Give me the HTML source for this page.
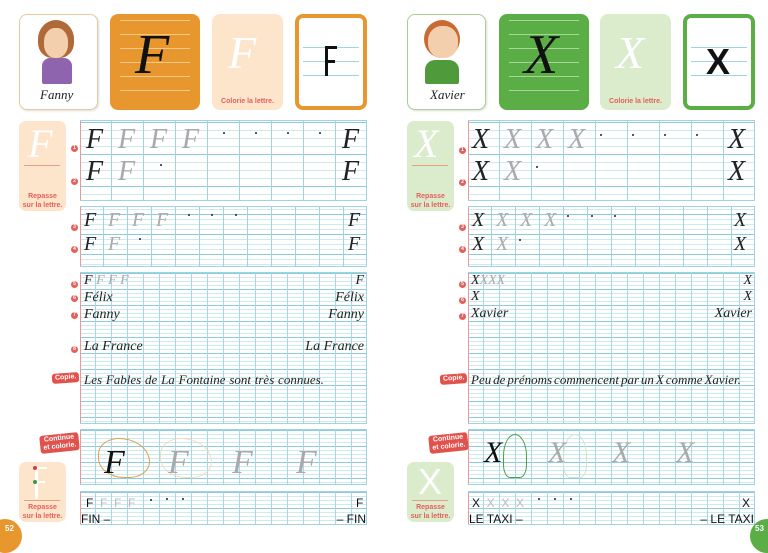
<!DOCTYPE html>
<html><head><meta charset="utf-8"><style>
*{margin:0;padding:0;box-sizing:border-box}
body{width:768px;height:541px;background:#fff;position:relative;overflow:hidden;font-family:"Liberation Sans",sans-serif}
.a{position:absolute}
.g{position:absolute;background-color:#fff;
background-image:
linear-gradient(90deg,#e89a9a 0,#e89a9a 1px,transparent 1px),
repeating-linear-gradient(90deg,transparent 0,transparent 31px,#9fd3e0 31px,#9fd3e0 32px),
repeating-linear-gradient(180deg,#8fcadb 0,#8fcadb 1px,transparent 1px,transparent 32px),
repeating-linear-gradient(180deg,#cfe9f0 0,#cfe9f0 1px,transparent 1px,transparent 8px);
border-top:1px solid #9fd3e0;border-bottom:1px solid #9fd3e0;border-right:1px solid #9fd3e0}
.g2{background-image:
linear-gradient(90deg,#e89a9a 0,#e89a9a 1px,transparent 1px),
repeating-linear-gradient(90deg,transparent 0,transparent 23px,#9fd3e0 23px,#9fd3e0 24px),
repeating-linear-gradient(180deg,#8fcadb 0,#8fcadb 1px,transparent 1px,transparent 20px),
repeating-linear-gradient(180deg,#cfe9f0 0,#cfe9f0 1px,transparent 1px,transparent 5px)}
.g3{background-image:
linear-gradient(90deg,#e89a9a 0,#e89a9a 1px,transparent 1px),
repeating-linear-gradient(90deg,transparent 0,transparent 15px,#a8d8e4 15px,#a8d8e4 16px),
repeating-linear-gradient(180deg,#8fcadb 0,#8fcadb 1px,transparent 1px,transparent 16px),
repeating-linear-gradient(180deg,#cfe9f0 0,#cfe9f0 1px,transparent 1px,transparent 4px)}
.c{position:absolute;font-family:"Liberation Serif",serif;font-style:italic;color:#222;line-height:1;white-space:nowrap}
.gr{color:#aaa}
.n{position:absolute;width:7px;height:7px;border-radius:50%;background:#e4605a;color:#fff;font-size:5px;text-align:center;line-height:7px;font-weight:bold}
.lab{position:absolute;background:#e1524c;color:#fff;font-size:7px;font-weight:bold;border-radius:3px;text-align:center;line-height:8px;padding:1px 3px}
.rp{position:absolute;color:#e4605a;font-size:7px;font-weight:bold;text-align:center;line-height:9px}
.dot{position:absolute;width:2px;height:2px;background:#222;border-radius:50%}
.pr{position:absolute;font-size:12px;color:#111;line-height:1;white-space:nowrap}
.sent{display:flex;justify-content:space-between}
</style></head><body>

<!-- LEFT PAGE cards -->
<div class="a" style="left:19px;top:14px;width:79px;height:96px;border:1px solid #e8c9a0;border-radius:8px;background:#fff;box-shadow:1px 1px 2px #ddd"></div>
<div class="a" style="left:38px;top:20px;width:36px;height:38px;border-radius:50% 50% 40% 40%;background:#b06a3a"></div>
<div class="a" style="left:44px;top:28px;width:24px;height:30px;border-radius:45%;background:#f4cfae"></div>
<div class="a" style="left:42px;top:58px;width:30px;height:26px;border-radius:8px 8px 2px 2px;background:#8d64ad"></div>
<div class="c" style="left:40px;top:88px;font-size:13px">Fanny</div>
<div class="a" style="left:110px;top:14px;width:90px;height:96px;border-radius:8px;background:#e8962e"></div>
<div class="a" style="left:120px;top:20px;width:70px;height:84px;background:repeating-linear-gradient(180deg,#f6c88a 0,#f6c88a 1px,transparent 1px,transparent 14px)"></div>
<div class="c" style="left:135px;top:27px;font-size:56px;color:#111">F</div>
<div class="a" style="left:212px;top:14px;width:71px;height:96px;border-radius:8px;background:#fde5cc"></div>
<div class="c" style="left:228px;top:30px;font-size:46px;color:#fff">F</div>
<div class="rp" style="left:212px;top:97px;width:71px">Colorie la lettre.</div>
<div class="a" style="left:295px;top:14px;width:72px;height:96px;border:4px solid #e8962e;border-radius:8px;background:#fff"></div>
<div class="a" style="left:303px;top:47px;width:56px;height:1px;background:#9fd3e0"></div>
<div class="a" style="left:303px;top:61px;width:56px;height:1px;background:#9fd3e0"></div>
<div class="a" style="left:303px;top:75px;width:56px;height:1px;background:#9fd3e0"></div>
<div class="a" style="left:325px;top:46px;width:3px;height:30px;background:#111"></div>
<div class="a" style="left:325px;top:46px;width:12px;height:3px;background:#111"></div>
<div class="a" style="left:325px;top:60px;width:10px;height:3px;background:#111"></div>

<div class="a" style="left:19px;top:121px;width:47px;height:90px;border-radius:7px;background:#fde5cc"></div>
<div class="c" style="left:28px;top:124px;font-size:40px;color:#fff">F</div>
<div class="a" style="left:24px;top:165px;width:36px;height:1px;background:#e4a080"></div>
<div class="rp" style="left:19px;top:192px;width:47px">Repasse<br>sur la lettre.</div>

<!-- left grids -->
<div class="g" style="left:80px;top:120px;width:287px;height:81px;background-position:0 0,0 0,0 1px,0 1px"></div>
<div class="c" style="left:86px;top:126px;font-size:28px">F</div>
<div class="c gr" style="left:118px;top:126px;font-size:28px">F</div>
<div class="c gr" style="left:150px;top:126px;font-size:28px">F</div>
<div class="c gr" style="left:182px;top:126px;font-size:28px">F</div>
<div class="dot" style="left:223px;top:132px"></div><div class="dot" style="left:255px;top:132px"></div><div class="dot" style="left:287px;top:132px"></div><div class="dot" style="left:319px;top:132px"></div>
<div class="c" style="left:342px;top:126px;font-size:28px">F</div>
<div class="c" style="left:86px;top:158px;font-size:28px">F</div>
<div class="c gr" style="left:118px;top:158px;font-size:28px">F</div>
<div class="dot" style="left:160px;top:164px"></div>
<div class="c" style="left:342px;top:158px;font-size:28px">F</div>
<div class="n" style="left:71px;top:145px">1</div><div class="n" style="left:71px;top:178px">2</div>

<div class="g g2" style="left:80px;top:206px;width:287px;height:61px;background-position:0 0,0 0,0 7px,0 2px"></div>
<div class="c" style="left:84px;top:210px;font-size:20px">F</div>
<div class="c gr" style="left:108px;top:210px;font-size:20px">F</div>
<div class="c gr" style="left:132px;top:210px;font-size:20px">F</div>
<div class="c gr" style="left:156px;top:210px;font-size:20px">F</div>
<div class="dot" style="left:188px;top:214px"></div><div class="dot" style="left:211px;top:214px"></div><div class="dot" style="left:235px;top:214px"></div>
<div class="c" style="left:348px;top:210px;font-size:20px">F</div>
<div class="c" style="left:84px;top:234px;font-size:20px">F</div>
<div class="c gr" style="left:108px;top:234px;font-size:20px">F</div>
<div class="dot" style="left:139px;top:238px"></div>
<div class="c" style="left:348px;top:234px;font-size:20px">F</div>
<div class="n" style="left:71px;top:224px">3</div><div class="n" style="left:71px;top:246px">4</div>

<div class="g g3" style="left:80px;top:272px;width:287px;height:152px"></div>
<div class="c" style="left:84px;top:274px;font-size:14px">F <span class="gr">F F F</span></div>
<div class="c" style="right:404px;top:274px;font-size:14px">F</div>
<div class="c" style="left:84px;top:291px;font-size:14px">Félix</div>
<div class="c" style="right:404px;top:291px;font-size:14px">Félix</div>
<div class="c" style="left:84px;top:308px;font-size:14px">Fanny</div>
<div class="c" style="right:404px;top:308px;font-size:14px">Fanny</div>
<div class="c" style="left:84px;top:340px;font-size:14px">La France</div>
<div class="c" style="right:404px;top:340px;font-size:14px">La France</div>
<div class="c sent" style="left:84px;top:373px;width:240px;font-size:13px"><span>Les</span><span>Fables</span><span>de</span><span>La</span><span>Fontaine</span><span>sont</span><span>très</span><span>connues.</span></div>
<div class="n" style="left:71px;top:281px">5</div><div class="n" style="left:71px;top:295px">6</div><div class="n" style="left:71px;top:312px">7</div><div class="n" style="left:71px;top:346px">8</div>
<div class="lab" style="left:52px;top:373px;transform:rotate(-4deg)">Copie.</div>

<div class="g g3" style="left:80px;top:429px;width:287px;height:56px"></div>
<div class="lab" style="left:40px;top:434px;transform:rotate(-6deg)">Continue<br>et colorie.</div>
<div class="a" style="left:98px;top:438px;width:52px;height:40px;border:1px solid #d9a050;border-radius:40% 60% 40% 50%"></div>
<div class="c" style="left:104px;top:446px;font-size:34px;color:#111">F</div>
<div class="a" style="left:160px;top:438px;width:52px;height:40px;border:1px solid #f0dcc0;border-radius:40% 60% 40% 50%"></div>
<div class="c gr" style="left:168px;top:446px;font-size:34px">F</div>
<div class="c gr" style="left:232px;top:446px;font-size:34px">F</div>
<div class="c gr" style="left:296px;top:446px;font-size:34px">F</div>

<div class="g g3" style="left:80px;top:491px;width:287px;height:34px"></div>
<div class="pr" style="left:86px;top:497px">F <span style="color:#bbb">&nbsp;F &nbsp;F &nbsp;F</span></div>
<div class="dot" style="left:150px;top:499px"></div><div class="dot" style="left:166px;top:498px"></div><div class="dot" style="left:182px;top:498px"></div>
<div class="pr" style="left:356px;top:497px">F</div>
<div class="pr" style="left:81px;top:513px">FIN –</div>
<div class="pr" style="right:402px;top:513px">– FIN</div>

<div class="a" style="left:19px;top:462px;width:47px;height:60px;border-radius:7px;background:#fde5cc"></div>
<div class="a" style="left:35px;top:467px;width:3px;height:32px;background:#fff"></div>
<div class="a" style="left:35px;top:467px;width:12px;height:2px;background:#fff"></div>
<div class="a" style="left:35px;top:481px;width:10px;height:2px;background:#fff"></div>
<div class="a" style="left:33px;top:466px;width:4px;height:4px;border-radius:50%;background:#d04040"></div>
<div class="a" style="left:33px;top:480px;width:4px;height:4px;border-radius:50%;background:#3a9a3a"></div>
<div class="a" style="left:24px;top:500px;width:36px;height:1px;background:#e4a080"></div>
<div class="rp" style="left:19px;top:503px;width:47px">Repasse<br>sur la lettre.</div>
<div class="a" style="left:-12px;top:519px;width:34px;height:34px;border-radius:50%;background:#e8962e"></div>
<div class="a" style="left:5px;top:524px;color:#fff;font-size:8px;font-weight:bold">52</div>

<!-- RIGHT PAGE cards -->
<div class="a" style="left:407px;top:14px;width:79px;height:96px;border:1px solid #a9cf95;border-radius:8px;background:#fff;box-shadow:1px 1px 2px #ddd"></div>
<div class="a" style="left:424px;top:20px;width:36px;height:38px;border-radius:50%;background:#c86a32"></div>
<div class="a" style="left:428px;top:26px;width:30px;height:32px;border-radius:45%;background:#f4cfae"></div>
<div class="a" style="left:425px;top:60px;width:34px;height:24px;border-radius:10px 10px 2px 2px;background:#4f9a3a"></div>
<div class="c" style="left:430px;top:88px;font-size:13px">Xavier</div>
<div class="a" style="left:499px;top:14px;width:90px;height:96px;border-radius:8px;background:#5aae45"></div>
<div class="a" style="left:509px;top:20px;width:70px;height:84px;background:repeating-linear-gradient(180deg,#a6d796 0,#a6d796 1px,transparent 1px,transparent 14px)"></div>
<div class="c" style="left:524px;top:27px;font-size:56px;color:#111">X</div>
<div class="a" style="left:600px;top:14px;width:71px;height:96px;border-radius:8px;background:#dbeccd"></div>
<div class="c" style="left:616px;top:30px;font-size:46px;color:#fff">X</div>
<div class="rp" style="left:600px;top:97px;width:71px">Colorie la lettre.</div>
<div class="a" style="left:683px;top:14px;width:72px;height:96px;border:4px solid #5aae45;border-radius:8px;background:#fff"></div>
<div class="a" style="left:691px;top:47px;width:56px;height:1px;background:#9fd3e0"></div>
<div class="a" style="left:691px;top:61px;width:56px;height:1px;background:#9fd3e0"></div>
<div class="a" style="left:691px;top:75px;width:56px;height:1px;background:#9fd3e0"></div>
<div class="pr" style="left:706px;top:44px;font-size:36px;font-weight:bold">X</div>

<div class="a" style="left:407px;top:121px;width:47px;height:90px;border-radius:7px;background:#dbeccd"></div>
<div class="c" style="left:414px;top:124px;font-size:40px;color:#fff">X</div>
<div class="a" style="left:412px;top:165px;width:36px;height:1px;background:#e4a080"></div>
<div class="rp" style="left:407px;top:192px;width:47px">Repasse<br>sur la lettre.</div>

<div class="g" style="left:468px;top:120px;width:287px;height:81px;background-position:0 0,0 0,0 1px,0 1px"></div>
<div class="c" style="left:472px;top:126px;font-size:28px">X</div>
<div class="c gr" style="left:504px;top:126px;font-size:28px">X</div>
<div class="c gr" style="left:536px;top:126px;font-size:28px">X</div>
<div class="c gr" style="left:568px;top:126px;font-size:28px">X</div>
<div class="dot" style="left:600px;top:134px"></div><div class="dot" style="left:632px;top:134px"></div><div class="dot" style="left:664px;top:134px"></div><div class="dot" style="left:696px;top:134px"></div>
<div class="c" style="left:728px;top:126px;font-size:28px">X</div>
<div class="c" style="left:472px;top:158px;font-size:28px">X</div>
<div class="c gr" style="left:504px;top:158px;font-size:28px">X</div>
<div class="dot" style="left:536px;top:166px"></div>
<div class="c" style="left:728px;top:158px;font-size:28px">X</div>
<div class="n" style="left:459px;top:147px">1</div><div class="n" style="left:459px;top:179px">2</div>

<div class="g g2" style="left:468px;top:206px;width:287px;height:61px;background-position:0 0,0 0,0 7px,0 2px"></div>
<div class="c" style="left:472px;top:210px;font-size:20px">X</div>
<div class="c gr" style="left:496px;top:210px;font-size:20px">X</div>
<div class="c gr" style="left:520px;top:210px;font-size:20px">X</div>
<div class="c gr" style="left:544px;top:210px;font-size:20px">X</div>
<div class="dot" style="left:567px;top:215px"></div><div class="dot" style="left:591px;top:215px"></div><div class="dot" style="left:614px;top:215px"></div>
<div class="c" style="left:734px;top:210px;font-size:20px">X</div>
<div class="c" style="left:472px;top:234px;font-size:20px">X</div>
<div class="c gr" style="left:496px;top:234px;font-size:20px">X</div>
<div class="dot" style="left:519px;top:239px"></div>
<div class="c" style="left:734px;top:234px;font-size:20px">X</div>
<div class="n" style="left:459px;top:224px">3</div><div class="n" style="left:459px;top:246px">4</div>

<div class="g g3" style="left:468px;top:272px;width:287px;height:152px"></div>
<div class="c" style="left:471px;top:274px;font-size:14px">X<span class="gr">XXX</span></div>
<div class="c" style="right:16px;top:274px;font-size:14px">X</div>
<div class="c" style="left:471px;top:290px;font-size:14px">X</div>
<div class="c" style="right:16px;top:290px;font-size:14px">X</div>
<div class="c" style="left:471px;top:307px;font-size:14px">Xavier</div>
<div class="c" style="right:16px;top:307px;font-size:14px">Xavier</div>
<div class="c sent" style="left:471px;top:373px;width:270px;font-size:13px"><span>Peu</span><span>de</span><span>prénoms</span><span>commencent</span><span>par</span><span>un</span><span>X</span><span>comme</span><span>Xavier.</span></div>
<div class="n" style="left:459px;top:281px">5</div><div class="n" style="left:459px;top:297px">6</div><div class="n" style="left:459px;top:313px">7</div>
<div class="lab" style="left:440px;top:374px;transform:rotate(-4deg)">Copie.</div>

<div class="g g3" style="left:468px;top:429px;width:287px;height:56px"></div>
<div class="lab" style="left:429px;top:434px;transform:rotate(-6deg)">Continue<br>et colorie.</div>
<div class="a" style="left:503px;top:434px;width:24px;height:44px;border:1px solid #4aa040;border-radius:50% 50% 30% 30%"></div>
<div class="c" style="left:484px;top:438px;font-size:30px;color:#111">X</div>
<div class="a" style="left:563px;top:434px;width:24px;height:44px;border:1px solid #cfe6c4;border-radius:50% 50% 30% 30%"></div>
<div class="c gr" style="left:548px;top:438px;font-size:30px">X</div>
<div class="c gr" style="left:612px;top:438px;font-size:30px">X</div>
<div class="c gr" style="left:676px;top:438px;font-size:30px">X</div>

<div class="g g3" style="left:468px;top:491px;width:287px;height:34px"></div>
<div class="pr" style="left:472px;top:497px">X <span style="color:#bbb">&nbsp;X &nbsp;X &nbsp;X</span></div>
<div class="dot" style="left:538px;top:498px"></div><div class="dot" style="left:554px;top:498px"></div><div class="dot" style="left:570px;top:498px"></div>
<div class="pr" style="left:742px;top:497px">X</div>
<div class="pr" style="left:469px;top:513px">LE TAXI –</div>
<div class="pr" style="right:14px;top:513px">– LE TAXI</div>

<div class="a" style="left:407px;top:462px;width:47px;height:60px;border-radius:7px;background:#dbeccd"></div>
<div class="pr" style="left:418px;top:464px;font-size:36px;color:#fff">X</div>
<div class="a" style="left:412px;top:500px;width:36px;height:1px;background:#e4a080"></div>
<div class="rp" style="left:407px;top:503px;width:47px">Repasse<br>sur la lettre.</div>
<div class="a" style="left:750px;top:519px;width:34px;height:34px;border-radius:50%;background:#5aae45"></div>
<div class="a" style="left:755px;top:524px;color:#fff;font-size:8px;font-weight:bold">53</div>
</body></html>
